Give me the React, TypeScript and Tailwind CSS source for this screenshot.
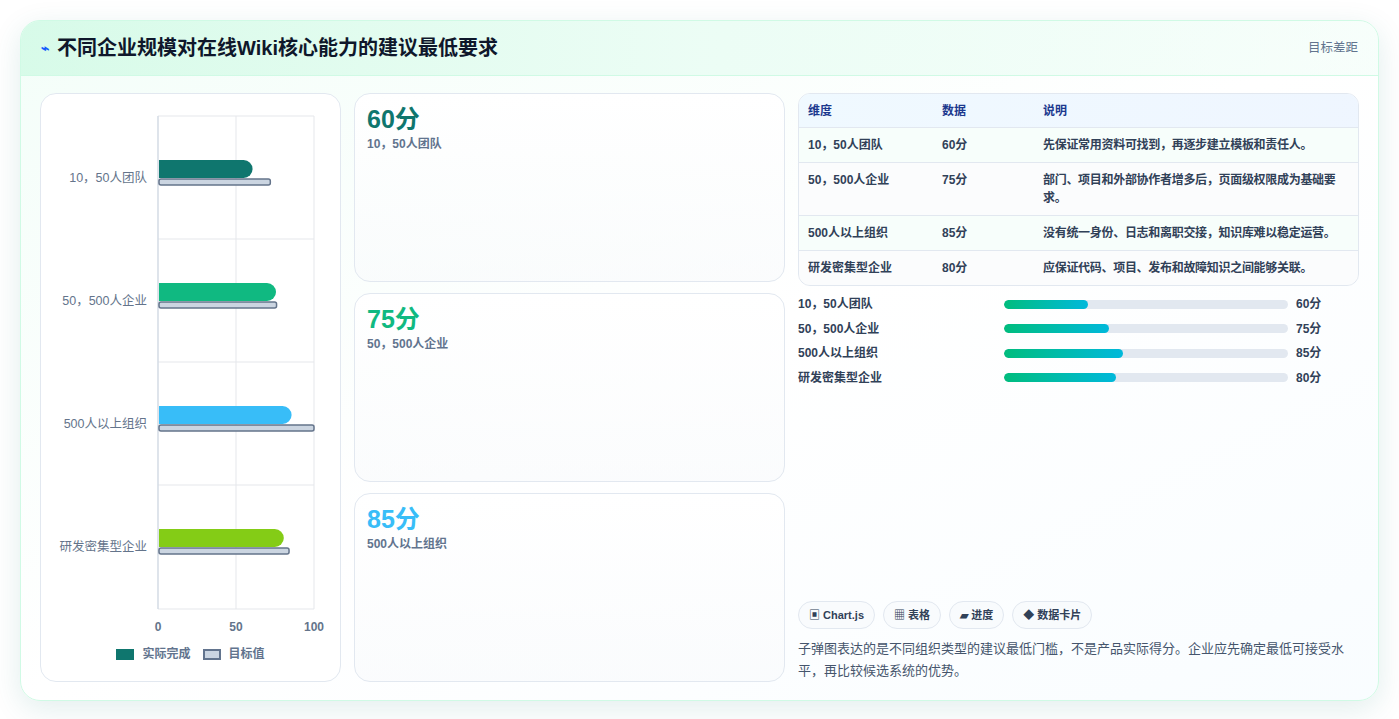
const rows = [
  { name: "10，50人团队", v: 60, t: 72, color: "#0f766e", desc: "先保证常用资料可找到，再逐步建立模板和责任人。" },
  { name: "50，500人企业", v: 75, t: 76, color: "#10b981", desc: "部门、项目和外部协作者增多后，页面级权限成为基础要求。" },
  { name: "500人以上组织", v: 85, t: 100, color: "#38bdf8", desc: "没有统一身份、日志和离职交接，知识库难以稳定运营。" },
  { name: "研发密集型企业", v: 80, t: 84, color: "#84cc16", desc: "应保证代码、项目、发布和故障知识之间能够关联。" },
];

const Chart = () => {
  const x0 = 117;
  const w = 156;
  return (
    <svg width="300" height="545" className="block">
      {[0, 50, 100].map((g) => (
        <line key={g} x1={x0 + (g / 100) * w} x2={x0 + (g / 100) * w} y1={22} y2={515} stroke="#e5e7eb" />
      ))}
      {[22, 145, 268, 391, 515].map((y) => (
        <line key={y} x1={x0} x2={x0 + w} y1={y} y2={y} stroke="#e5e7eb" />
      ))}
      <line x1={x0} x2={x0} y1={22} y2={515} stroke="#cbd5e1" />
      {rows.map((r, i) => {
        const cy = 84 + i * 123;
        const bw = (r.v / 100) * w;
        const xs = x0 + 1;
        return (
          <g key={r.name}>
            <text x={106} y={cy + 4} textAnchor="end" fontSize="12.5" fill="#64748b" fontFamily="Liberation Sans, Noto Sans CJK SC, sans-serif">
              {r.name}
            </text>
            <path d={`M${xs} ${cy - 18} H${xs + bw - 9} A9 9 0 0 1 ${xs + bw} ${cy - 9} A9 9 0 0 1 ${xs + bw - 9} ${cy} H${xs} Z`} fill={r.color} />
            <rect x={x0 + 1} y={cy + 1} width={(r.t / 100) * w - 1} height={6} rx={2} fill="#cbd5e1" stroke="#64748b" strokeWidth="1.5" />
          </g>
        );
      })}
      {[0, 50, 100].map((g) => (
        <text key={g} x={x0 + (g / 100) * w} y={537} textAnchor="middle" fontSize="12" fontWeight="700" fill="#64748b" fontFamily="Liberation Sans, sans-serif">
          {g}
        </text>
      ))}
    </svg>
  );
};

export default function App() {
  return (
    <div className="min-h-screen bg-white p-5 text-slate-800" style={{ fontFamily: "'Liberation Sans', 'Noto Sans CJK SC', sans-serif" }}>
      <div className="h-[681px] rounded-[20px] border border-emerald-100 bg-gradient-to-br from-emerald-50/60 via-white to-sky-50/40 shadow-[0_8px_30px_rgba(15,118,110,0.12)] overflow-hidden flex flex-col">
        <div className="h-[55px] shrink-0 flex items-center justify-between px-5 bg-gradient-to-r from-emerald-100/80 via-emerald-50 to-emerald-50/40 border-b border-emerald-100">
          <div className="flex items-center gap-2">
            <span className="text-blue-600 text-sm font-bold">⌁</span>
            <h1 className="text-[20px] font-bold text-slate-900">不同企业规模对在线Wiki核心能力的建议最低要求</h1>
          </div>
          <span className="text-[12.5px] text-slate-500">目标差距</span>
        </div>
        <div className="flex-1 flex gap-[13px] px-[19px] pt-[17px] pb-[18px]">
          <div className="w-[301px] shrink-0 rounded-2xl border border-slate-200 bg-white flex flex-col">
            <Chart />
            <div className="flex items-center justify-center gap-2 mt-[6px] text-[12px] font-bold text-slate-500">
              <span className="w-[18px] h-[11px] bg-[#0f766e]" />
              <span>实际完成</span>
              <span className="w-[18px] h-[11px] bg-slate-300 border-2 border-slate-500 ml-1" />
              <span>目标值</span>
            </div>
          </div>
          <div className="w-[431px] shrink-0 flex flex-col gap-[11px]">
            {rows.slice(0, 3).map((r) => (
              <div key={r.name} className="flex-1 rounded-2xl border border-slate-200 bg-gradient-to-b from-white to-slate-50/60 px-3 pt-2.5">
                <div className="text-[25px] font-bold leading-tight" style={{ color: r.color }}>{r.v}分</div>
                <div className="text-[12px] font-bold text-slate-500">{r.name}</div>
              </div>
            ))}
          </div>
          <div className="flex-1 flex flex-col">
            <div className="rounded-xl border border-slate-200 overflow-hidden text-[12px] font-bold bg-white">
              <div className="grid grid-cols-[134px_101px_1fr] h-[34px] items-center pl-[9px] bg-gradient-to-r from-sky-50 to-blue-50 text-blue-900 border-b border-slate-200">
                <span>维度</span><span>数据</span><span>说明</span>
              </div>
              {rows.map((r, i) => (
                <div key={r.name} className={`grid grid-cols-[134px_101px_1fr] pl-[9px] pr-[6px] py-[8px] leading-[18px] text-slate-700 ${i < 3 ? "border-b border-slate-200" : ""} ${i % 2 === 0 ? "bg-emerald-50/40" : "bg-slate-50/60"}`}>
                  <span>{r.name}</span><span>{r.v}分</span><span className="tracking-[-0.3px]">{r.desc}</span>
                </div>
              ))}
            </div>
            <div className="mt-[9px] flex flex-col gap-[6px] text-[12px] font-bold text-slate-700">
              {rows.map((r) => (
                <div key={r.name} className="flex items-center h-[18.5px]">
                  <span className="w-[206px]">{r.name}</span>
                  <div className="w-[284px] h-[9px] rounded-full bg-slate-200 overflow-hidden">
                    <div className="h-full rounded-full bg-gradient-to-r from-emerald-500 to-cyan-500" style={{ width: `${r.v * 0.493}%` }} />
                  </div>
                  <span className="ml-2">{r.v}分</span>
                </div>
              ))}
            </div>
            <div className="mt-auto">
              <div className="flex gap-2 text-[11px] font-bold text-slate-700">
                {["▣ Chart.js", "▦ 表格", "▰ 进度", "◆ 数据卡片"].map((c) => (
                  <span key={c} className="h-[28px] px-2.5 flex items-center rounded-full border border-slate-200 bg-slate-50/80">{c}</span>
                ))}
              </div>
              <p className="mt-[9px] text-[13px] leading-[22px] text-slate-600 pr-3">
                子弹图表达的是不同组织类型的建议最低门槛，不是产品实际得分。企业应先确定最低可接受水平，再比较候选系统的优势。
              </p>
            </div>
          </div>
        </div>
      </div>
    </div>
  );
}
